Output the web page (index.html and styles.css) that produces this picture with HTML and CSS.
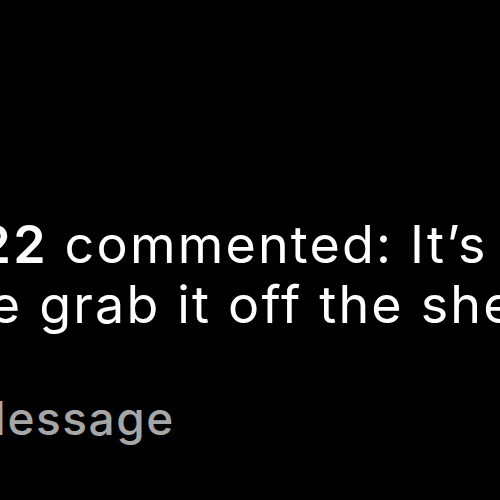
FILE: index.html
```html
<!DOCTYPE html>
<html lang="en">
  <head>
    <meta charset="UTF-8" />
    <meta name="viewport" content="width=device-width, initial-scale=1.0" />
    <title>Notification</title>
    <link rel="stylesheet" href="styles.css">
  </head>
  <body>
    <main class="notification">
      <div class="notification-body">
        <p class="line line-first"><strong class="user">user22</strong> commented: It’s a</p>
        <p class="line line-second">we grab it off the shelf</p>
      </div>
      <p class="reply">Message</p>
    </main>
  </body>
</html>
```

FILE: styles.css
```css
body {
  margin: 0;
  padding: 0;
  background-color: #000;
  font-family: "Inter", "Noto Sans", sans-serif;
  color: #fff;
}

/* Notification card, zoomed in so the edges fall outside the window */
.notification {
  width: 500px;
  height: 500px;
  overflow: hidden;
  padding-top: 215px;
  box-sizing: border-box;
}

.line {
  margin: 0;
  font-size: 52px;
  line-height: 60px;
  letter-spacing: 2.2px;
  white-space: nowrap;
}

.user {
  font-weight: 600;
}

.line-first {
  text-indent: -142px;
}

.line-second {
  text-indent: -54px;
}

/* Reply field */
.reply {
  margin: 53px 0 0;
  font-size: 46px;
  line-height: 60px;
  font-weight: 500;
  letter-spacing: 1.5px;
  color: #a6a6a6;
  white-space: nowrap;
  text-indent: -36px;
}
```
